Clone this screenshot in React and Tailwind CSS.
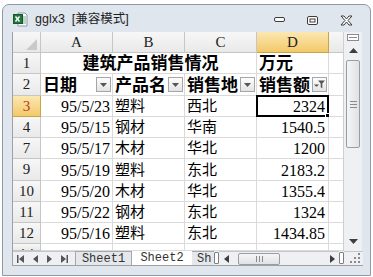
import React from "react";

const cellFont = "font-['Liberation_Serif','Noto_Sans_CJK_SC',serif]";

function DropBtn({ filter }) {
  return (
    <span className="absolute right-[1px] top-[3px] flex h-[15px] w-[15px] items-center justify-center border border-[#a6a6a6] bg-gradient-to-b from-[#fdfdfd] to-[#e3e3e3]">
      {filter ? (
        <svg width="11" height="9" viewBox="0 0 11 9">
          <path d="M0 4.5h5L3 6.5h-1z" fill="#555" />
          <path d="M4 0.5h7L8.3 3.6V8.2L6.7 7.2V3.6z" fill="#555" />
        </svg>
      ) : (
        <svg width="7" height="4" viewBox="0 0 7 4">
          <path d="M0 0h7L3.5 4z" fill="#555" />
        </svg>
      )}
    </span>
  );
}

export default function App() {
  const rows = [
    { n: "3", date: "95/5/23", p: "塑料", r: "西北", v: "2324", sel: true },
    { n: "4", date: "95/5/15", p: "钢材", r: "华南", v: "1540.5" },
    { n: "7", date: "95/5/17", p: "木材", r: "华北", v: "1200" },
    { n: "9", date: "95/5/19", p: "塑料", r: "东北", v: "2183.2" },
    { n: "10", date: "95/5/20", p: "木材", r: "华北", v: "1355.4" },
    { n: "11", date: "95/5/22", p: "钢材", r: "东北", v: "1324" },
    { n: "12", date: "95/5/16", p: "塑料", r: "东北", v: "1434.85" },
  ];

  const hdr =
    "flex items-center justify-center border-r border-b border-[#c6c6c6] bg-gradient-to-b from-[#f7f7f7] to-[#e9e9e9] text-[15px] text-[#222]";
  const cell = "relative flex items-end border-r border-b border-[#dadada] bg-white leading-[19px]";

  return (
    <div className="h-[277px] w-[373px] overflow-hidden bg-white">
      <div className="mx-[2px] mt-[4px] flex h-[272px] w-[369px] flex-col rounded-t-[7px] border border-[#8e9aa7] bg-[#dfe6ee] pl-[9px] pr-[7px]">
        {/* title bar */}
        <div className="flex h-[27px] shrink-0 items-center">
          <svg width="15" height="15" viewBox="0 0 15 15" className="ml-[1px] mt-[2px]">
            <path d="M5 1h7l2 2v11H5z" fill="#fff" stroke="#8a9aa8" />
            <rect x="0.5" y="2.5" width="9" height="9" fill="#1f7a3c" stroke="#14592a" />
            <path d="M2.5 4.5l4 5M6.5 4.5l-4 5" stroke="#fff" strokeWidth="1.4" />
            <path d="M10 5h3M10 7h3M10 9h3M10 11h3" stroke="#7fb08a" />
          </svg>
          <span className="ml-[7px] mt-[2px] font-['Liberation_Sans','Noto_Sans_CJK_SC',sans-serif] text-[12.5px] text-[#1e1e1e]">
            gglx3&nbsp;&nbsp;[兼容模式]
          </span>
          <div className="ml-auto mr-[10px] mt-[3px] flex items-center gap-[22px]">
            <svg width="11" height="6" viewBox="0 0 11 6">
              <rect x="0.5" y="0.5" width="10" height="4" rx="1.5" fill="#fff" stroke="#3c3c3c" />
            </svg>
            <svg width="11" height="9" viewBox="0 0 11 9">
              <rect x="0.5" y="0.5" width="10" height="8" rx="1.5" fill="#fff" stroke="#3c3c3c" />
              <rect x="3" y="3" width="5" height="3" fill="none" stroke="#3c3c3c" />
            </svg>
            <svg width="13" height="11" viewBox="0 0 13 11">
              <path
                d="M1 1h3l2.5 3L9 1h3L8 5.5 12 10H9L6.5 7 4 10H1l4-4.5z"
                fill="#fff"
                stroke="#3c3c3c"
                strokeLinejoin="round"
              />
            </svg>
          </div>
        </div>

        {/* sheet + vertical scroll */}
        <div className="flex h-[219px] shrink-0">
          <div
            className={`grid h-[219px] w-[331px] overflow-hidden grid-cols-[28px_72px_72px_72px_72px_15px] grid-rows-[21px_21px_22px_21px_21px_21px_22px_21px_21px_21px_7px] border-l border-[#a0a0a0] ${cellFont}`}
          >
            {/* column headers */}
            <div className={`${hdr} relative`}>
              <svg width="11" height="11" viewBox="0 0 11 11" className="absolute bottom-[2px] right-[3px]">
                <path d="M11 0V11H0z" fill="#c9c9c9" />
              </svg>
            </div>
            <div className={hdr}>A</div>
            <div className={hdr}>B</div>
            <div className={hdr}>C</div>
            <div className="flex items-center justify-center border-r border-b border-[#c9a54a] bg-gradient-to-b from-[#fbe8b0] to-[#f3c868] text-[15px] text-[#222]">
              D
            </div>
            <div className={hdr}></div>

            {/* row 1 */}
            <div className={`${hdr} text-[#111]`}>1</div>
            <div className={`${cell} col-span-3 justify-center text-[17px] font-bold text-black`}>
              <span className="pl-[4px]">建筑产品销售情况</span>
            </div>
            <div className={`${cell} pl-[2px] text-[17px] font-bold text-black`}>万元</div>
            <div className={cell}></div>

            {/* row 2 */}
            <div className={`${hdr} text-[#111]`}>2</div>
            <div className={`${cell} pl-[2px] text-[17px] font-bold text-black`}>
              日期
              <DropBtn />
            </div>
            <div className={`${cell} pl-[2px] text-[17px] font-bold text-black`}>
              产品名
              <DropBtn />
            </div>
            <div className={`${cell} pl-[2px] text-[17px] font-bold text-black`}>
              销售地
              <DropBtn />
            </div>
            <div className={`${cell} pl-[2px] text-[17px] font-bold text-black`}>
              销售额
              <DropBtn filter />
            </div>
            <div className={cell}></div>

            {rows.map((row) => (
              <React.Fragment key={row.n}>
                {row.sel ? (
                  <div className="flex items-center justify-center border-r border-b border-[#c9a54a] bg-gradient-to-b from-[#fbe8b0] to-[#f3c868] text-[15px] text-[#b0421c]">
                    {row.n}
                  </div>
                ) : (
                  <div className={`${hdr} text-[#1f1fd0]`}>{row.n}</div>
                )}
                <div className={`${cell} justify-end pr-[2px] text-[16px] text-black`}>{row.date}</div>
                <div className={`${cell} pl-[2px] text-[15px] text-black`}>{row.p}</div>
                <div className={`${cell} pl-[2px] text-[15px] text-black`}>{row.r}</div>
                <div className={`${cell} justify-end pr-[3px] text-[16px] text-black`}>
                  {row.v}
                  {row.sel && (
                    <span className="absolute -left-[1px] -top-[1px] h-[22px] w-[73px] border-2 border-black">
                      <span className="absolute -bottom-[4px] -right-[4px] h-[6px] w-[6px] border border-white bg-black" />
                    </span>
                  )}
                </div>
                <div className={cell}></div>
              </React.Fragment>
            ))}

            {/* row 14, cut off */}
            <div className={`${hdr} items-start overflow-hidden text-[#1f1fd0]`}>
              <span className="-mt-[1px]">14</span>
            </div>
            <div className={cell}></div>
            <div className={cell}></div>
            <div className={cell}></div>
            <div className={cell}></div>
            <div className={cell}></div>
          </div>

          {/* vertical scrollbar */}
          <div className="flex w-[19px] flex-col items-center border-l border-[#cfcfcf] bg-[#eef0f3]">
            <div className="mt-[2px] flex h-[7px] w-[12px] items-center justify-center border border-[#8c8c8c] bg-white">
              <div className="h-[1px] w-[8px] bg-[#8c8c8c]" />
            </div>
            <svg width="9" height="5" viewBox="0 0 9 5" className="mt-[7px]">
              <path d="M4.5 0L9 5H0z" fill="#3e3e3e" />
            </svg>
            <div className="mt-[7px] flex h-[88px] w-[14px] items-center justify-center rounded-[2px] border border-[#9a9ea4] bg-gradient-to-r from-[#f4f5f7] to-[#dfe2e6]">
              <div className="flex flex-col gap-[2px]">
                <div className="h-[1px] w-[7px] bg-[#8a8a8a]" />
                <div className="h-[1px] w-[7px] bg-[#8a8a8a]" />
                <div className="h-[1px] w-[7px] bg-[#8a8a8a]" />
              </div>
            </div>
            <svg width="9" height="5" viewBox="0 0 9 5" className="mt-auto mb-[7px]">
              <path d="M0 0H9L4.5 5z" fill="#3e3e3e" />
            </svg>
          </div>
        </div>

        {/* sheet tabs + horizontal scroll */}
        <div className="flex h-[15px] shrink-0 items-stretch border-l border-b border-[#a0a0a0] bg-[#eef0f3] font-['Liberation_Mono',monospace] text-[12px] leading-[14px] text-[#333]">
          <div className="flex w-[62px] items-center gap-[9px] border-t border-[#c6c6c6] pl-[4px]">
            <svg width="7" height="8" viewBox="0 0 7 8">
              <path d="M0 0h1.5v8H0zM7 0v8L2 4z" fill="#555" />
            </svg>
            <svg width="5" height="8" viewBox="0 0 5 8">
              <path d="M5 0v8L0 4z" fill="#555" />
            </svg>
            <svg width="5" height="8" viewBox="0 0 5 8">
              <path d="M0 0v8L5 4z" fill="#555" />
            </svg>
            <svg width="7" height="8" viewBox="0 0 7 8">
              <path d="M0 0v8L5 4zM5.5 0H7v8H5.5z" fill="#555" />
            </svg>
          </div>
          <div className="flex w-[57px] items-center justify-center border-t border-l border-r border-[#a8a8a8] bg-[#e4e7eb]">
            Sheet1
          </div>
          <div className="flex w-[60px] items-center justify-center bg-white">Sheet2</div>
          <div className="flex w-[22px] items-center overflow-hidden border-t border-[#a8a8a8] bg-[#e4e7eb] pl-[5px]">
            Sh
          </div>
          <div className="my-[1px] w-[5px] rounded-[1px] border border-[#7e7e7e] bg-white" />
          <div className="flex flex-1 items-center border-t border-[#c6c6c6] pl-[5px] pr-[4px]">
            <svg width="5" height="8" viewBox="0 0 5 8">
              <path d="M5 0v8L0 4z" fill="#3e3e3e" />
            </svg>
            <div className="ml-[9px] flex h-[12px] w-[42px] items-center justify-center gap-[2px] rounded-[2px] border border-[#9a9ea4] bg-gradient-to-b from-[#f4f5f7] to-[#dfe2e6]">
              <div className="h-[6px] w-[1px] bg-[#8a8a8a]" />
              <div className="h-[6px] w-[1px] bg-[#8a8a8a]" />
              <div className="h-[6px] w-[1px] bg-[#8a8a8a]" />
            </div>
            <svg width="5" height="8" viewBox="0 0 5 8" className="ml-auto">
              <path d="M0 0v8L5 4z" fill="#3e3e3e" />
            </svg>
          </div>
          <div className="my-[1px] w-[5px] rounded-[1px] border border-[#7e7e7e] bg-white" />
          <div className="flex w-[19px] items-end justify-end border-t border-[#c6c6c6] pb-[2px] pr-[3px]">
            <svg width="10" height="10" viewBox="0 0 10 10">
              <rect x="8" y="0" width="2" height="2" fill="#8a8a8a" />
              <rect x="8" y="4" width="2" height="2" fill="#8a8a8a" />
              <rect x="4" y="4" width="2" height="2" fill="#8a8a8a" />
              <rect x="8" y="8" width="2" height="2" fill="#8a8a8a" />
              <rect x="4" y="8" width="2" height="2" fill="#8a8a8a" />
              <rect x="0" y="8" width="2" height="2" fill="#8a8a8a" />
            </svg>
          </div>
        </div>
      </div>
    </div>
  );
}
